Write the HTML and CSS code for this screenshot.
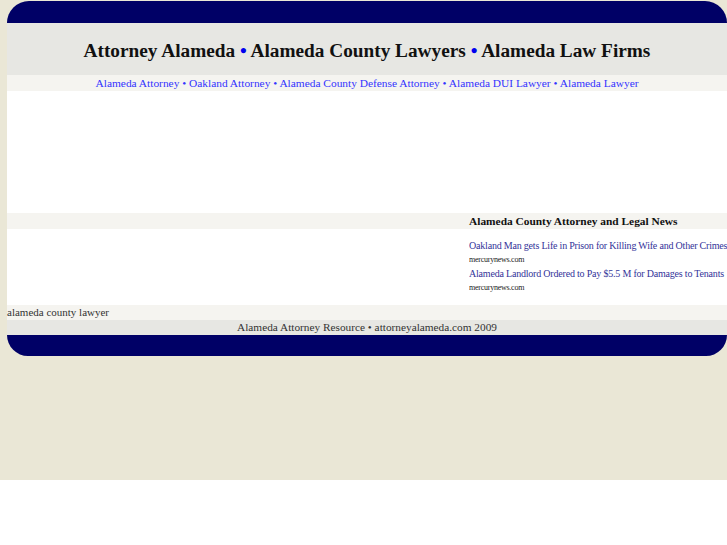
FILE: index.html
```html
<!DOCTYPE html>
<html>
<head>
<meta charset="utf-8">
<link rel="stylesheet" href="styles.css">
<title>Attorney Alameda</title>
</head>
<body>
<div class="page">
  <div class="box">
    <div class="cap-top"></div>
    <div class="header">
      <h1>Attorney Alameda <span class="dot">•</span> Alameda County Lawyers <span class="dot">•</span> Alameda Law Firms</h1>
    </div>
    <div class="links">
      <a href="#">Alameda Attorney</a> • <a href="#">Oakland Attorney</a> • <a href="#">Alameda County Defense Attorney</a> • <a href="#">Alameda DUI Lawyer</a> • <a href="#">Alameda Lawyer</a>
    </div>
    <div class="ad"></div>
    <div class="news-head">
      <div class="left"></div>
      <h2>Alameda County Attorney and Legal News</h2>
    </div>
    <div class="news-body">
      <div class="left"></div>
      <div class="news">
        <a href="#">Oakland Man gets Life in Prison for Killing Wife and Other Crimes</a>
        <div class="src">mercurynews.com</div>
        <a href="#">Alameda Landlord Ordered to Pay $5.5 M for Damages to Tenants</a>
        <div class="src">mercurynews.com</div>
      </div>
    </div>
    <div class="tag">alameda county lawyer</div>
    <div class="footer">Alameda Attorney Resource • attorneyalameda.com 2009</div>
    <div class="cap-bottom"></div>
  </div>
</div>
</body>
</html>
```
FILE: styles.css
```css
html, body {
  margin: 0;
  padding: 0;
  background: #ffffff;
  font-family: "Liberation Serif", "Times New Roman", serif;
}
.page {
  background: #eae7d6;
  height: 479px;
  padding: 1px 0 0 7px;
}
.box {
  width: 720px;
}
.cap-top {
  height: 22px;
  background: #000066;
  border-radius: 22px 22px 0 0;
}
.cap-bottom {
  height: 21px;
  background: #000066;
  border-radius: 0 0 22px 22px;
}
.header {
  height: 49px;
  padding-top: 3px;
  background: #e7e7e3;
  display: flex;
  align-items: center;
  justify-content: center;
}
.header h1 {
  margin: 0;
  font-size: 19.3px;
  font-weight: bold;
  color: #111111;
}
.dot { color: #0000ee; }
.links {
  height: 16px;
  line-height: 16px;
  background: #f5f4f0;
  text-align: center;
  font-size: 11.4px;
  color: #3333ff;
}
.links a { color: #3333ff; text-decoration: none; }
.ad {
  height: 122px;
  background: #ffffff;
}
.news-head {
  height: 16px;
  background: #f5f4f0;
  display: flex;
}
.left { width: 462px; flex: none; }
.news-head h2 {
  margin: 0;
  font-size: 11.4px;
  line-height: 16px;
  font-weight: bold;
  color: #111111;
  white-space: nowrap;
}
.news-body {
  height: 76px;
  background: #ffffff;
  display: flex;
}
.news {
  padding-top: 10px;
  font-size: 10px;
  line-height: 14px;
  letter-spacing: -0.2px;
  white-space: nowrap;
  overflow: hidden;
}
.news a { display: block; color: #333399; text-decoration: none; }
.news .src { font-size: 8px; letter-spacing: -0.25px; color: #222222; }
.tag {
  height: 15px;
  line-height: 15px;
  background: #f5f4f0;
  font-size: 11px;
  color: #333333;
}
.footer {
  height: 15px;
  line-height: 15px;
  background: #e7e7e3;
  text-align: center;
  font-size: 11.3px;
  color: #333333;
}
```
